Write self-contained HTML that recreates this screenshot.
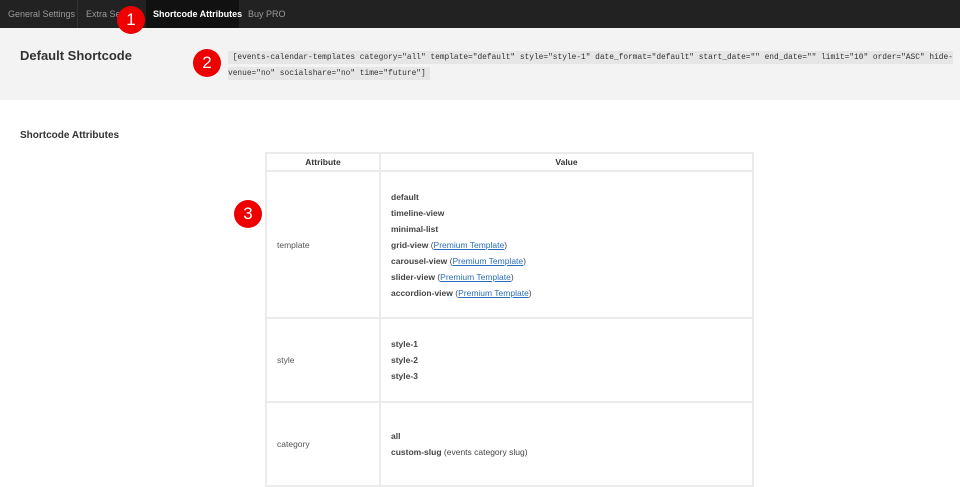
<!DOCTYPE html>
<html><head><meta charset="utf-8"><style>
*{margin:0;padding:0;box-sizing:border-box}
body{width:960px;height:468px;overflow:hidden;background:#fff;font-family:"Liberation Sans",sans-serif;color:#333;position:relative}
.nav{position:absolute;left:0;top:0;width:960px;height:28px;background:#222}
.nav span{position:absolute;top:0;height:28px;line-height:28px;font-size:9px;color:#9a9a9a;white-space:nowrap}
.nav .act{background:#111;color:#fff;font-weight:bold}
.sep{position:absolute;top:0;width:1px;height:28px;background:#333}
.gray{position:absolute;left:0;top:28px;width:960px;height:72px;background:#f3f3f3}
h2{position:absolute;font-size:13px;font-weight:bold;color:#333}
.code{position:absolute;left:228px;top:50px;width:732px;font-family:"Liberation Mono",monospace;font-size:7.85px;line-height:16px;color:#333;white-space:nowrap}
.code span{background:#e6e6e6;padding:2px 0}
.circ{position:absolute;width:28px;height:28px;border-radius:50%;background:#e00;color:#fff;font-size:17px;text-align:center;line-height:28px}
table{position:absolute;left:265px;top:152px;width:489px;border-collapse:separate;border-spacing:2px;background:#ebebeb;font-size:8.5px}
td,th{background:#fff;vertical-align:middle}
th{height:16px;font-weight:bold;color:#333;text-align:center}
td.a{width:112px;padding-left:10px;color:#555}
td.v{padding-left:10px;line-height:16px;font-weight:bold;color:#444}
td.v a{color:#2a6ebb;text-decoration:underline;font-weight:normal}
td.v i{font-style:normal;font-weight:normal}
</style></head><body>
<div class="nav">
<span style="left:8px">General Settings</span>
<div class="sep" style="left:77px"></div>
<span style="left:86px">Extra Settings</span>
<span class="act" style="left:146px;width:93px;padding-left:7px">Shortcode Attributes</span>
<span style="left:248px">Buy PRO</span>
</div>
<div style="position:absolute;left:189px;top:28px;width:0;height:0;border-left:3px solid transparent;border-right:3px solid transparent;border-top:3px solid #111"></div>
<div class="gray"></div>
<h2 style="left:20px;top:48px">Default Shortcode</h2>
<div class="code"><span>&nbsp;[events-calendar-templates category="all" template="default" style="style-1" date_format="default" start_date="" end_date="" limit="10" order="ASC" hide-</span><br><span>venue="no" socialshare="no" time="future"]&nbsp;</span></div>
<h2 style="left:20px;top:130px;font-size:10px">Shortcode Attributes</h2>
<table>
<tr><th style="width:112px">Attribute</th><th>Value</th></tr>
<tr style="height:145px"><td class="a">template</td><td class="v">default<br>timeline-view<br>minimal-list<br>grid-view <i>(<a>Premium Template</a>)</i><br>carousel-view <i>(<a>Premium Template</a>)</i><br>slider-view <i>(<a>Premium Template</a>)</i><br>accordion-view <i>(<a>Premium Template</a>)</i></td></tr>
<tr style="height:82px"><td class="a">style</td><td class="v">style-1<br>style-2<br>style-3</td></tr>
<tr style="height:82px"><td class="a">category</td><td class="v">all<br>custom-slug <i>(events category slug)</i></td></tr>
</table>
<div class="circ" style="left:117px;top:6px">1</div>
<div class="circ" style="left:193px;top:49px">2</div>
<div class="circ" style="left:234px;top:200px">3</div>
</body></html>
